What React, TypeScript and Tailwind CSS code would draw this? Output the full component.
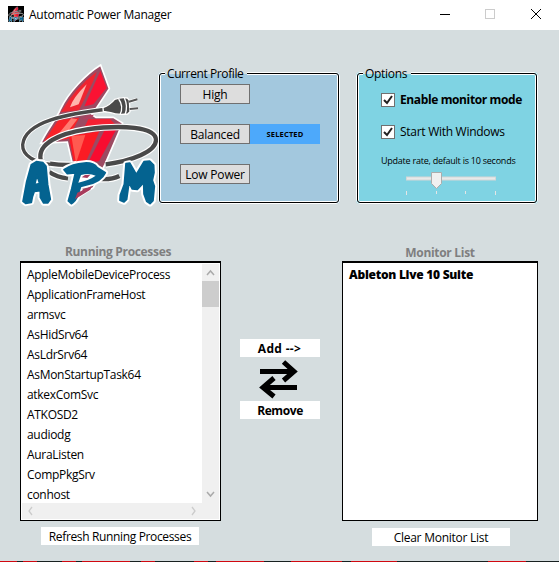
import React from "react";

const processes = [
  "AppleMobileDeviceProcess", "ApplicationFrameHost", "armsvc", "AsHidSrv64",
  "AsLdrSrv64", "AsMonStartupTask64", "atkexComSvc", "ATKOSD2", "audiodg",
  "AuraListen", "CompPkgSrv", "conhost",
];

// Widths of the bottom edge's stripes, alternating red and black.
const stripes = [17, 6, 14, 25, 14, 6, 48, 11, 14, 39, 14, 8, 48, 27, 51, 9, 46, 91, 38, 33];

const letters = [
  "M64 326L79 317L99 320L108 331L113 386L121 430L113 441L101 441L91 424L91 404L73 406L67 423L64 439L47 442L39 436L50 377ZM81 358L74 386L89 383Z",
  "M162 341Q187 323 223 321Q250 319 262 335L286 350Q274 377 232 386L212 391L204 417Q197 436 184 443L175 435L185 399L196 351L172 353ZM213 357L205 380Q239 372 257 359Q237 350 213 357Z",
  "M348 323L359 321L379 355L402 317L419 315L431 327L432 350L427 373L433 391L429 434L420 443L410 436L402 414L401 380L382 400L367 399L357 380L350 430L342 438L330 433L331 417L343 385Z",
];

function LogoArt() {
  const cable = "M132 327C75 320 36 300 38 266C45 196 170 173 300 159";
  const loop = "M92 311C82 262 150 232 230 220C335 206 438 212 438 252C438 287 365 315 287 325M120 323Q165 329 200 325M118 348Q140 364 174 367M268 369Q304 372 328 360";
  return (
    <>
      <path d="M272 27C228 54 175 110 151 160C139 190 112 220 92 262L172 258L192 345L210 380L195 430L250 395L285 325L338 201L310 184L258 184L246 176L298 98Z" fill="#9c4a62" stroke="#fff" strokeWidth="5" />
      <path d="M260 47Q195 95 153 168L207 163L250 75Z" fill="#ef2430" />
      <path d="M230 85Q188 126 180 154L206 145Z" fill="#ffb5ac" />
      <path d="M271 45L223 151L250 145L290 96Z" fill="#fb1233" />
      <path d="M145 192L102 256L174 249L208 185Z" fill="#f72228" />
      <path d="M184 187L138 243L165 237L202 190Z" fill="#ff7b71" />
      <path d="M235 190L222 216L315 205L300 189Z" fill="#f42032" />
      <path d="M176 240L197 345L222 330L268 226Z" fill="#fb1b24" />
      <path d="M184 240L198 322L226 237Z" fill="#ff5a50" />
      <path d="M283 224L235 319L267 316L318 222Z" fill="#f80c30" />
      <path d="M235 178L252 176L241 188L216 190Z" fill="#b04060" />

      <g fill="none">
        <path d={cable} stroke="#fff" strokeWidth="16" />
        <path d={cable} stroke="#4a4a4a" strokeWidth="10" />
        <path d={loop} stroke="#fff" strokeWidth="20" />
        <path d={loop} stroke="#4a4a4a" strokeWidth="13" />
      </g>
      <path d="M279 155Q300 147 314 130Q335 122 352 126L358 133L360 167L353 174Q321 178 302 170L280 166Z" fill="#4a4a4a" stroke="#fff" strokeWidth="4" />
      <path d="M326 129Q342 151 330 176M343 126Q355 151 345 176" fill="none" stroke="#fff" strokeWidth="4" />
      <path d="M359 137L381 130M360 159L384 157" stroke="#fff" strokeWidth="10" />
      <path d="M357 137L382 130M359 159L384 157" stroke="#555" strokeWidth="6" />

      <g strokeLinejoin="round" fillRule="evenodd">
        {letters.map(d => <path key={d} d={d} fill="#fff" stroke="#fff" strokeWidth="17" />)}
        {letters.map(d => <path key={d} d={d} fill="#046390" stroke="#046390" strokeWidth="5" />)}
      </g>
      <path d="M213 357Q237 350 257 359Q239 372 205 380Z" fill="#fff" />
      <path d="M202 410L245 391L241 401L195 430ZM215 364L225 357L241 356L232 366Z" fill="#a83b5c" />
    </>
  );
}

function Check() {
  return (
    <span className="flex h-[14px] w-[14px] shrink-0 items-center justify-center border border-[#707070] bg-white">
      <svg className="h-3 w-3" viewBox="0 0 12 12"><path d="M2 6L5 9L10 2" fill="none" stroke="#212121" strokeWidth="2" /></svg>
    </span>
  );
}

function ProfileButton({ children }: { children: React.ReactNode }) {
  return <button className="block h-5 w-[70px] border border-[#707070] bg-[#ddd] text-center leading-[20px] tracking-[-0.2px]">{children}</button>;
}

export default function App() {
  return (
    <main className="flex h-[562px] w-[559px] flex-col overflow-hidden bg-[#d5dddf] font-['Open_Sans','Noto_Sans',sans-serif] text-[12px] leading-4 tracking-[-0.3px] text-black">
      <header className="flex h-[30px] shrink-0 items-center bg-white pl-2">
        <svg className="mt-[-2px] h-4 w-4 bg-black" viewBox="15 15 440 440"><LogoArt /></svg>
        <h1 className="ml-[5px] mt-[-1px] w-[410px] whitespace-nowrap font-normal tracking-[-0.27px]">Automatic Power Manager</h1>
        <svg className="mt-[-2px] h-3 w-[102px]" viewBox="0 0 102 12" fill="none" shapeRendering="crispEdges">
          <path d="M1 6.500H11" stroke="#000" />
          <rect x="46.500" y="1.500" width="9" height="9" stroke="#ccc" />
          <path d="M92 1L102 11M102 1L92 11" stroke="#000" shapeRendering="auto" />
        </svg>
      </header>

      <section className="flex h-[174px] shrink-0">
        <div className="w-[158px] shrink-0 pl-[10px] pt-[26px]"><svg className="h-[160px] w-[150px]" viewBox="0 0 450 480"><LogoArt /></svg></div>
        <fieldset className="relative mt-[42px] h-[132px] w-[182px] shrink-0 rounded-[4px] border border-white bg-[#a3c8de]">
          <div className="absolute inset-0 rounded-[3px] border border-black shadow-[inset_0_0_0_1px_white]" />
          <span className="absolute left-[6px] top-[-7px] h-4 w-[82px] whitespace-nowrap bg-linear-to-b from-[#d5dddf] from-50% to-[#a3c8de] to-50% pl-[2px] tracking-[-0.4px]">Current Profile</span>
          <div className="relative flex flex-col gap-5 pl-[21px] pt-[11px]">
            <ProfileButton>High</ProfileButton>
            <div className="flex"><ProfileButton>Balanced</ProfileButton><span className="h-5 w-[70px] bg-[#4da9fb] text-center text-[7.5px] font-bold leading-[21px] tracking-[0.15px]">SELECTED</span></div>
            <ProfileButton>Low Power</ProfileButton>
          </div>
        </fieldset>
        <fieldset className="relative ml-[16px] mt-[42px] h-[132px] w-[182px] shrink-0 rounded-[4px] border border-white bg-[#7fd3e3]">
          <div className="absolute inset-0 rounded-[3px] border border-black shadow-[inset_0_0_0_1px_white]" />
          <span className="absolute left-[6px] top-[-7px] h-4 w-[48px] bg-linear-to-b from-[#d5dddf] from-50% to-[#7fd3e3] to-50% pl-[2px] tracking-[-0.3px]">Options</span>
          <div className="relative pl-[24px] pt-[19px]">
            <label className="flex h-4 items-center gap-[5px] whitespace-nowrap font-bold tracking-[-0.38px]"><Check />Enable monitor mode</label>
            <label className="mt-4 flex h-4 items-center gap-[5px] whitespace-nowrap tracking-[-0.28px]"><Check />Start With Windows</label>
            <p className="mt-[13px] h-4 whitespace-nowrap text-[9px] tracking-[-0.24px]">Update rate, default is 10 seconds</p>
            <svg className="ml-[24px] mt-[3px] h-[25px] w-[92px]" viewBox="0 0 92 25">
              <path d="M1 6.500h90" stroke="#d6d6d6" strokeWidth="4" /><path d="M2 6.500h88" stroke="#e7eaea" strokeWidth="2" />
              <path d="M26.500.500h10v11l-5 5l-5-5z" fill="#f0f0f0" stroke="#acacac" />
              <path d="M1.500 19v4M31.500 19v3M60.500 19v3M90.500 19v4" stroke="#e5e5e5" />
            </svg>
          </div>
        </fieldset>
      </section>

      <section className="flex h-[357px] shrink-0 pl-5">
        <div className="w-[201px] shrink-0 pt-10">
          <h2 className="h-[17px] pr-[5px] text-center font-bold tracking-[-0.33px] text-[#7f7f7f]">Running Processes</h2>
          <div className="flex h-[260px] border border-t-2 border-black bg-white p-px">
            <div className="flex w-[180px] flex-col">
              <ul className="h-[239px] overflow-hidden pl-[5px] pt-[1px]">
                {processes.map(name => <li key={name} className="h-5 leading-5">{name}</li>)}
              </ul>
              <svg className="h-[16px] w-[180px] bg-[#f0f0f0]" viewBox="0 0 180 16"><path d="M10 4L7 8L10 12M170 4L173 8L170 12" fill="none" stroke="#ccc" strokeWidth="1.300" /></svg>
            </div>
            <div className="h-[255px] w-[17px] bg-[#f0f0f0]">
              <svg className="h-[17px] w-[17px]" viewBox="0 0 17 17"><path d="M5 11L8.500 7L12 11" fill="none" stroke="#aaa" strokeWidth="1.500" /></svg>
              <div className="h-[26px] bg-[#cdcdcd]" />
              <svg className="mt-[178px] h-[17px] w-[17px]" viewBox="0 0 17 17"><path d="M5 7L8.500 11L12 7" fill="none" stroke="#aaa" strokeWidth="1.500" /></svg>
            </div>
          </div>
          <button className="ml-[21px] mt-[6px] h-[18px] w-[158px] bg-white text-center leading-[20px] tracking-[-0.35px]">Refresh Running Processes</button>
        </div>
        <div className="flex w-[121px] shrink-0 flex-col items-start pl-[19px] pt-[135px]">
          <button className="h-[18px] w-20 bg-white pr-px text-center font-bold leading-[20px] tracking-[0.3px]">Add --&gt;</button>
          <svg className="ml-[18px] h-11 w-10" viewBox="0 0 40 44"><path d="M2 14.500H36M25.500 5L36 14.500L25.500 23.500M39 30.500H5M16 21L5 30.500L16 39.500" fill="none" stroke="#000" strokeWidth="5" /></svg>
          <button className="h-[18px] w-20 bg-white text-center font-bold leading-[20px] tracking-[-0.4px]">Remove</button>
        </div>
        <div className="w-[196px] shrink-0 pt-[41px]">
          <h2 className="h-4 text-center font-bold text-[#7f7f7f]">Monitor List</h2>
          <div className="h-[260px] border border-t-2 border-black bg-white pl-[6px] pt-[4px] font-extrabold tracking-[-0.27px]">Ableton Live 10 Suite</div>
          <button className="ml-[30px] mt-[7px] h-[18px] w-[138px] bg-white text-center leading-[20px] tracking-[-0.25px]">Clear Monitor List</button>
        </div>
      </section>
      <div className="flex h-px shrink-0">
        {stripes.map((width, i) => <i key={i} className={i % 2 ? "shrink-0 bg-[#182020]" : "shrink-0 bg-[#d10810]"} style={{ width }} />)}
      </div>
    </main>
  );
}
